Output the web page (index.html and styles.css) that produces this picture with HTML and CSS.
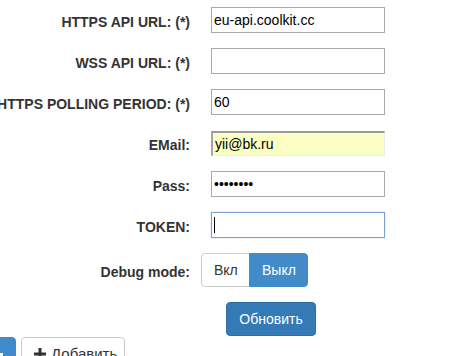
FILE: index.html
```html
<!DOCTYPE html>
<html>
	<head>
		<meta charset="utf-8">
		<link rel="stylesheet" href="styles.css">
	</head>
	<body>
		<form class="settings">
			<div class="row">
				<label class="caption">HTTPS API URL: (*)</label>
				<input class="field" type="text" value="eu-api.coolkit.cc">
			</div>
			<div class="row">
				<label class="caption">WSS API URL: (*)</label>
				<input class="field" type="text" value="">
			</div>
			<div class="row">
				<label class="caption">HTTPS POLLING PERIOD: (*)</label>
				<input class="field" type="text" value="60">
			</div>
			<div class="row">
				<label class="caption">EMail:</label>
				<input class="field autofill" type="text" value="yii@bk.ru">
			</div>
			<div class="row">
				<label class="caption">Pass:</label>
				<input class="field" type="password" value="12345678">
			</div>
			<div class="row">
				<label class="caption">TOKEN:</label>
				<div class="field focused"><span class="caret"></span></div>
			</div>
			<div class="row debug">
				<label class="caption">Debug mode:</label>
				<div class="btn_group">
					<button type="button" class="btn">Вкл</button>
					<button type="button" class="btn btn_on">Выкл</button>
				</div>
			</div>
			<div class="row submit">
				<button type="button" class="btn btn_primary">Обновить</button>
			</div>
		</form>
		<div class="toolbar">
			<button type="button" class="btn btn_blue">
				<svg class="icon" width="12" height="12" viewBox="0 0 12 12"><rect x="0" y="5" width="12" height="3" fill="#fff"/></svg>
			</button>
			<button type="button" class="btn btn_add">
				<svg class="icon" width="12" height="12" viewBox="0 0 12 12"><path d="M4.5 0h3v4.5H12v3H7.5V12h-3V7.5H0v-3h4.5z" fill="#333"/></svg>
				Добавить
			</button>
		</div>
	</body>
</html>
```

FILE: styles.css
```css
body {
	margin: 0;
	background: #fff;
	font-family: "Liberation Sans", Arial, sans-serif;
	color: #333;
	overflow: hidden;
}

.settings {
	padding-top: 7px;
}

.row {
	display: flex;
	align-items: center;
	height: 26px;
	margin-bottom: 15px;
}

.caption {
	width: 190px;
	flex: none;
	display: flex;
	justify-content: flex-end;
	white-space: nowrap;
	font-size: 14px;
	font-weight: bold;
	padding-top: 4px;
	margin-right: 21px;
}

.field {
	box-sizing: border-box;
	width: 174px;
	height: 26px;
	margin: 0;
	padding: 1px 2px;
	border: 1px solid #a9a9a9;
	font-family: "Liberation Sans", Arial, sans-serif;
	font-size: 14px;
	color: #000;
	background: #fff;
}

.autofill {
	height: 25px;
	background: #fbffc3;
	border-top: 2px solid #9a9a9a;
	border-left: 2px solid #a5a5a5;
	border-right: 1px solid #ececec;
	border-bottom: 1px solid #ececec;
}

.focused {
	border-color: #7c9fd5;
	box-shadow: 0 0 1px #a8c1ea;
	display: flex;
	align-items: center;
}

.caret {
	width: 1px;
	height: 16px;
	background: #000;
}

.debug {
	height: 34px;
}

.debug .caption {
	margin-right: 11px;
}

.btn {
	box-sizing: border-box;
	height: 34px;
	padding: 6px 12px;
	font-family: "Liberation Sans", Arial, sans-serif;
	font-size: 14px;
	border: 1px solid #ccc;
	border-radius: 4px;
	background: #fff;
	color: #333;
}

.btn_group {
	display: flex;
}

.btn_group .btn:first-child {
	border-top-right-radius: 0;
	border-bottom-right-radius: 0;
	width: 49px;
}

.btn_on {
	background: #428bca;
	border-color: #428bca;
	color: #fff;
	border-top-left-radius: 0;
	border-bottom-left-radius: 0;
	width: 59px;
	margin-left: -1px;
}

.submit {
	height: 34px;
	padding-left: 226px;
	margin-bottom: 1px;
}

.btn_primary {
	width: 90px;
	background: #337ab7;
	border-color: #2e6da4;
	color: #fff;
}

.toolbar {
	display: flex;
	gap: 5px;
}

.toolbar .btn {
	flex: none;
	display: flex;
	align-items: flex-start;
	gap: 5px;
	padding-top: 7px;
	font-size: 15px;
	white-space: nowrap;
}

.icon {
	flex: none;
	margin-top: 3px;
}

.btn_blue {
	width: 40px;
	margin-left: -24px;
	background: #428bca;
	border-color: #428bca;
	justify-content: flex-end;
}

.btn_add {
	width: 104px;
}
```
